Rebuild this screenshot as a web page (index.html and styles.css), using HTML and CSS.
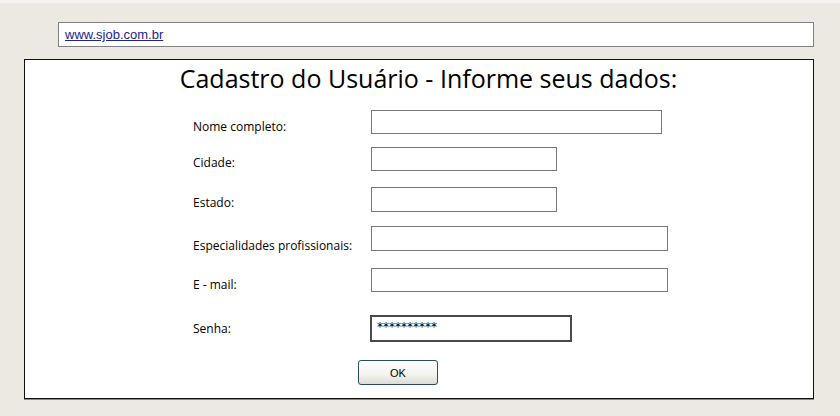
FILE: index.html
```html
<!DOCTYPE html>
<html lang="pt-BR">
<head>
<meta charset="utf-8">
<title>Cadastro do Usuário</title>
<link rel="stylesheet" href="styles.css">
</head>
<body>
<div class="topband"></div>
<div class="urlbar"><a class="url" href="#">www.sjob.com.br</a></div>
<main class="panel">
  <h1 class="title">Cadastro do Usuário - Informe seus dados:</h1>
  <form class="form">
    <div class="row row-nome">
      <label class="label">Nome completo:</label>
      <div class="field field-long"></div>
    </div>
    <div class="row row-cidade">
      <label class="label">Cidade:</label>
      <div class="field field-short"></div>
    </div>
    <div class="row row-estado">
      <label class="label">Estado:</label>
      <div class="field field-short field-tall"></div>
    </div>
    <div class="row row-espec">
      <label class="label">Especialidades profissionais:</label>
      <div class="field field-wide field-tall"></div>
    </div>
    <div class="row row-email">
      <label class="label">E - mail:</label>
      <div class="field field-wide"></div>
    </div>
    <div class="row row-senha">
      <label class="label">Senha:</label>
      <div class="field field-pass">**********</div>
    </div>
    <div class="actions">
      <button class="ok" type="button">OK</button>
    </div>
  </form>
</main>
</body>
</html>
```

FILE: styles.css
```css
html, body {
  margin: 0;
  padding: 0;
}
body {
  background: #ece9e3;
  width: 840px;
  height: 416px;
  overflow: hidden;
  color: #000;
}
.topband {
  height: 3px;
  background: #f5f3ef;
}
.urlbar {
  margin: 19px 0 0 58px;
  width: 748px;
  height: 23px;
  border: 1px solid #808080;
  background: #fff;
  display: flex;
  align-items: center;
  padding-left: 6px;
}
.url {
  font-family: "Liberation Sans", Arial, sans-serif;
  font-size: 13px;
  color: #23238c;
  text-decoration: underline;
}
.panel {
  display: block;
  margin: 12px 0 0 24px;
  width: 788px;
  height: 338px;
  border: 1px solid #111;
  box-shadow: 0 1px 0 #888;
  background: #fff;
}
.title {
  margin: 0;
  padding: 3px 0 0 19px;
  text-align: center;
  font-family: "Comic Sans MS", "Open Sans", sans-serif;
  font-weight: 400;
  font-size: 25px;
  line-height: 30px;
  color: #000;
}
.form {
  padding-left: 168px;
  font-family: "Comic Sans MS", "Open Sans", sans-serif;
}
.row {
  display: flex;
  align-items: flex-end;
}
.label {
  width: 178px;
  flex: none;
  font-size: 12px;
  line-height: 14px;
  color: #000;
}
.field {
  width: 184px;
  height: 22px;
  border: 1px solid #777;
  background: #fff;
}
.field-long { width: 289px; }
.field-short { width: 184px; }
.field-wide { width: 295px; }
.field-tall { height: 23px; }
.field-pass {
  box-sizing: border-box;
  width: 202px;
  height: 27px;
  margin-left: -1px;
  border: 2px solid #4a4a4a;
  padding: 3px 0 0 5px;
  font-family: "DejaVu Sans", sans-serif;
  font-size: 12px;
  line-height: 14px;
  color: #000;
}
.row-nome { margin-top: 17px; }
.row-cidade { margin-top: 13px; }
.row-cidade .label { padding-bottom: 1px; }
.row-estado { margin-top: 16px; }
.row-estado .label { padding-bottom: 2px; }
.row-espec { margin-top: 14px; }
.row-espec .label { margin-bottom: -2px; }
.row-email { margin-top: 17px; }
.row-senha { margin-top: 23px; }
.row-senha .label { padding-bottom: 6px; }
.actions {
  margin-top: 18px;
  padding-left: 165px;
}
.ok {
  display: block;
  width: 80px;
  height: 25px;
  border: 1px solid #2b4a6a;
  border-radius: 3px;
  background: linear-gradient(#ffffff, #f3f3ef 60%, #dcdcd4);
  font-family: "Liberation Sans", Arial, sans-serif;
  font-size: 11px;
  color: #000;
  padding: 0;
}
```
